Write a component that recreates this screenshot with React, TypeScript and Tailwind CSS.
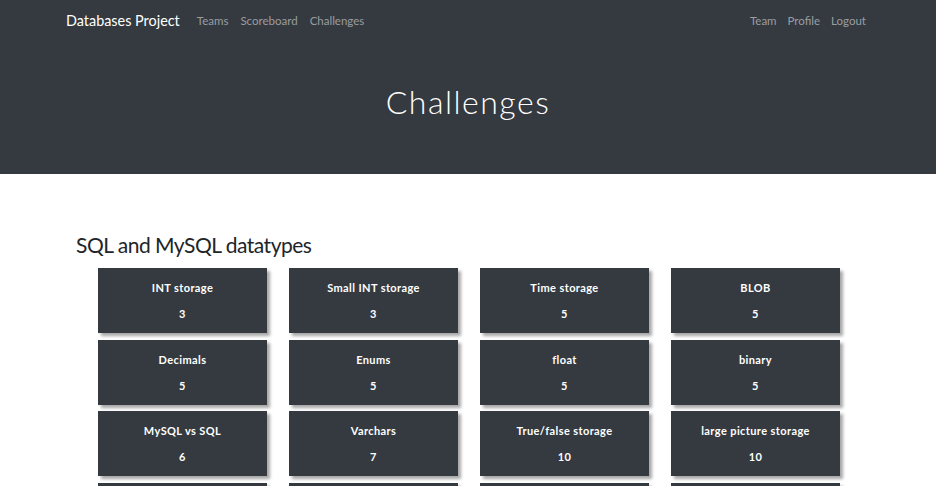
import React from "react";

const challenges = [
  { name: "INT storage", value: 3 },
  { name: "Small INT storage", value: 3 },
  { name: "Time storage", value: 5 },
  { name: "BLOB", value: 5 },
  { name: "Decimals", value: 5 },
  { name: "Enums", value: 5 },
  { name: "float", value: 5 },
  { name: "binary", value: 5 },
  { name: "MySQL vs SQL", value: 6 },
  { name: "Varchars", value: 7 },
  { name: "True/false storage", value: 10 },
  { name: "large picture storage", value: 10 },
];

const ChallengeCard = ({ name, value }: { name?: string; value?: number }) => (
  <button className="h-[65px] w-[169px] bg-[#343a40] text-white flex flex-col items-center justify-center gap-[15px] shadow-[3px_3px_3px_rgba(0,0,0,0.35)]">
    {name && <span className="text-[11px] font-bold tracking-[0.4px] leading-none">{name}</span>}
    {value !== undefined && <span className="text-[11px] font-bold tracking-[0.4px] leading-none">{value}</span>}
  </button>
);

export default function App() {
  return (
    <div className="min-h-screen bg-white font-['Lato','Liberation_Sans',sans-serif]">
      <div className="bg-[#343a40]">
        <nav className="h-[41px] flex items-center justify-between pl-[66px] pr-[70px]">
          <div className="flex items-center">
            <span className="text-white text-[14.4px] mr-[17px]">Databases Project</span>
            <div className="flex items-center gap-[12px] text-[11.5px] text-[#9a9da0]">
              <a>Teams</a>
              <a>Scoreboard</a>
              <a>Challenges</a>
            </div>
          </div>
          <div className="flex items-center gap-[11px] text-[11.5px] text-[#9a9da0]">
            <a>Team</a>
            <a>Profile</a>
            <a>Logout</a>
          </div>
        </nav>
        <div className="h-[133px] flex items-center justify-center pb-[11px]">
          <h1 className="text-white text-[32px] font-light tracking-[1.5px]">Challenges</h1>
        </div>
      </div>
      <main className="pl-[76px] pt-[60px]">
        <h3 className="text-[21px] tracking-[-0.5px] text-[#212529] leading-none mb-[13px]">SQL and MySQL datatypes</h3>
        <div className="ml-[22px] grid grid-cols-[repeat(4,169px)] gap-x-[22px] gap-y-[6.5px]">
          {challenges.map((c) => (
            <ChallengeCard key={c.name} name={c.name} value={c.value} />
          ))}
          <ChallengeCard />
          <ChallengeCard />
          <ChallengeCard />
          <ChallengeCard />
        </div>
      </main>
    </div>
  );
}
